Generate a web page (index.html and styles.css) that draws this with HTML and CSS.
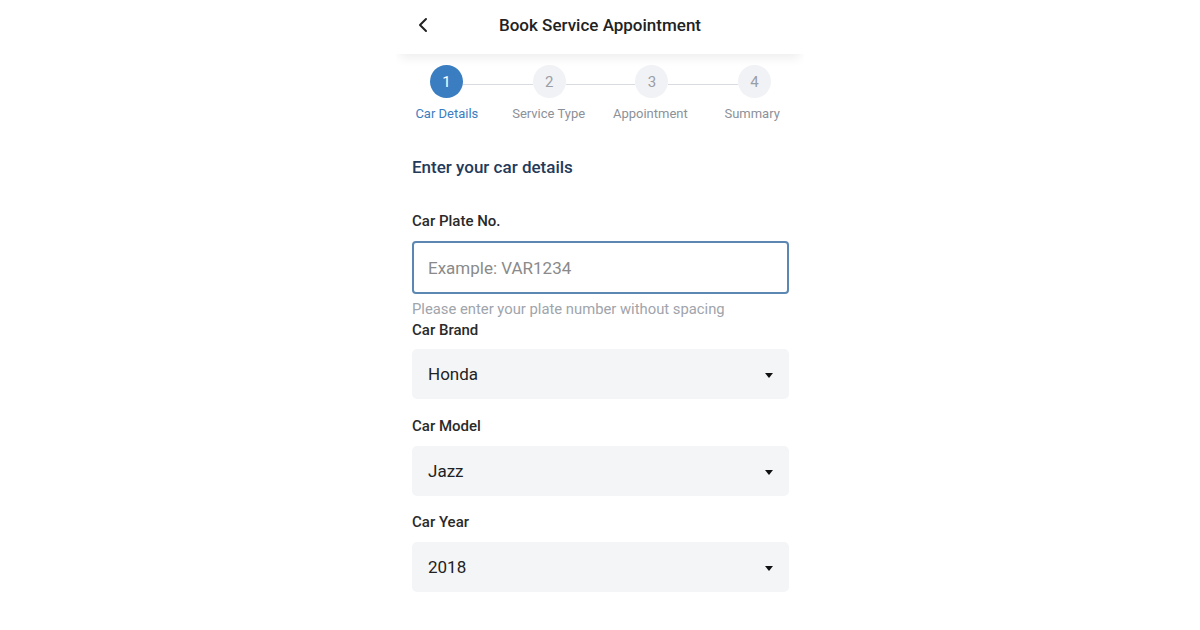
FILE: index.html
```html
<!DOCTYPE html>
<html lang="en">
<head>
<meta charset="utf-8">
<title>Book Service Appointment</title>
<link rel="stylesheet" href="styles.css">
</head>
<body>
<div class="screen">
  <header class="topbar">
    <div class="back">
      <svg width="14" height="16" viewBox="0 0 14 16"><path d="M9 2 L3 8 L9 14" fill="none" stroke="#222" stroke-width="2" stroke-linecap="round" stroke-linejoin="round"/></svg>
    </div>
    <h1 class="title">Book Service Appointment</h1>
    <div></div>
  </header>

  <section class="stepper">
    <div class="track">
      <span class="dot active">1</span>
      <span class="line"></span>
      <span class="dot">2</span>
      <span class="line"></span>
      <span class="dot">3</span>
      <span class="line"></span>
      <span class="dot">4</span>
    </div>
    <div class="labels">
      <span class="label active">Car Details</span>
      <span class="label">Service Type</span>
      <span class="label">Appointment</span>
      <span class="label">Summary</span>
    </div>
  </section>

  <main class="form">
    <h2 class="heading">Enter your car details</h2>

    <div class="field first">
      <div class="flabel">Car Plate No.</div>
      <div class="input">Example: VAR1234</div>
      <div class="hint">Please enter your plate number without spacing</div>
    </div>

    <div class="field tight">
      <div class="flabel">Car Brand</div>
      <div class="select"><span>Honda</span><i class="caret"></i></div>
    </div>

    <div class="field wide">
      <div class="flabel">Car Model</div>
      <div class="select"><span>Jazz</span><i class="caret"></i></div>
    </div>

    <div class="field">
      <div class="flabel">Car Year</div>
      <div class="select"><span>2018</span><i class="caret"></i></div>
    </div>
  </main>
</div>
</body>
</html>
```

FILE: styles.css
```css
* { box-sizing: border-box; }
html, body { margin: 0; padding: 0; background: #fff; }
body { font-family: Roboto, "Liberation Sans", Arial, sans-serif; color: #222; }

.screen {
  width: 408px;
  margin: 0 auto;
  height: 630px;
}

.topbar {
  height: 54px;
  display: grid;
  grid-template-columns: 1fr auto 1fr;
  align-items: center;
  position: relative;
  box-shadow: 0 8px 10px -4px rgba(0, 0, 0, 0.07);
  clip-path: inset(0 0 -24px 0);
  padding-bottom: 4px;
}
.back {
  padding-left: 21px;
  display: flex;
  align-items: center;
}
.title {
  margin: 0;
  font-size: 17px;
  font-weight: 500;
  color: #222;
  line-height: 24px;
}

.stepper { padding-top: 11px; }
.track {
  display: flex;
  align-items: center;
  padding: 0 33px 0 34px;
}
.dot {
  width: 33px;
  height: 33px;
  border-radius: 50%;
  background: #f1f2f5;
  color: #9a9ea6;
  font-size: 15px;
  display: flex;
  align-items: center;
  justify-content: center;
  flex: none;
}
.dot.active { background: #3b7dc1; color: #fff; }
.line {
  flex: 1;
  height: 1px;
  background: #d8dbe0;
  margin-top: 5px;
}
.labels {
  display: grid;
  grid-template-columns: repeat(4, 1fr);
  margin-top: 8px;
  padding-right: 1px;
}
.label {
  text-align: center;
  font-size: 13px;
  line-height: 16px;
  color: #8c9199;
}
.label.active { color: #3b7dc1; }

.form { padding: 0 15px 0 16px; }
.heading {
  margin: 33px 0 0;
  font-size: 17px;
  font-weight: 500;
  line-height: 24px;
  color: #243a5a;
}
.field { margin-top: 16px; }
.field.wide { margin-top: 17px; }
.field.first { margin-top: 32px; }
.field.tight { margin-top: 2px; }
.flabel {
  font-size: 15px;
  font-weight: 500;
  line-height: 20px;
  color: #2a2a2a;
  margin-bottom: 10px;
}
.field.tight .flabel { margin-bottom: 9px; }
.input {
  height: 53px;
  border: 2px solid #5b87b2;
  border-radius: 4px;
  padding: 0 14px;
  display: flex;
  align-items: center;
  font-size: 17px;
  color: #8a8a8a;
}
.hint {
  margin-top: 6px;
  font-size: 14.8px;
  line-height: 18px;
  color: #a0a4ab;
}
.select {
  height: 50px;
  background: #f4f5f7;
  border-radius: 5px;
  padding: 0 16px;
  display: flex;
  align-items: center;
  justify-content: space-between;
  font-size: 17px;
  color: #222;
}
.caret {
  width: 0;
  height: 0;
  border-left: 4.5px solid transparent;
  border-right: 4.5px solid transparent;
  border-top: 5px solid #111;
  margin-top: 2px;
}
```
